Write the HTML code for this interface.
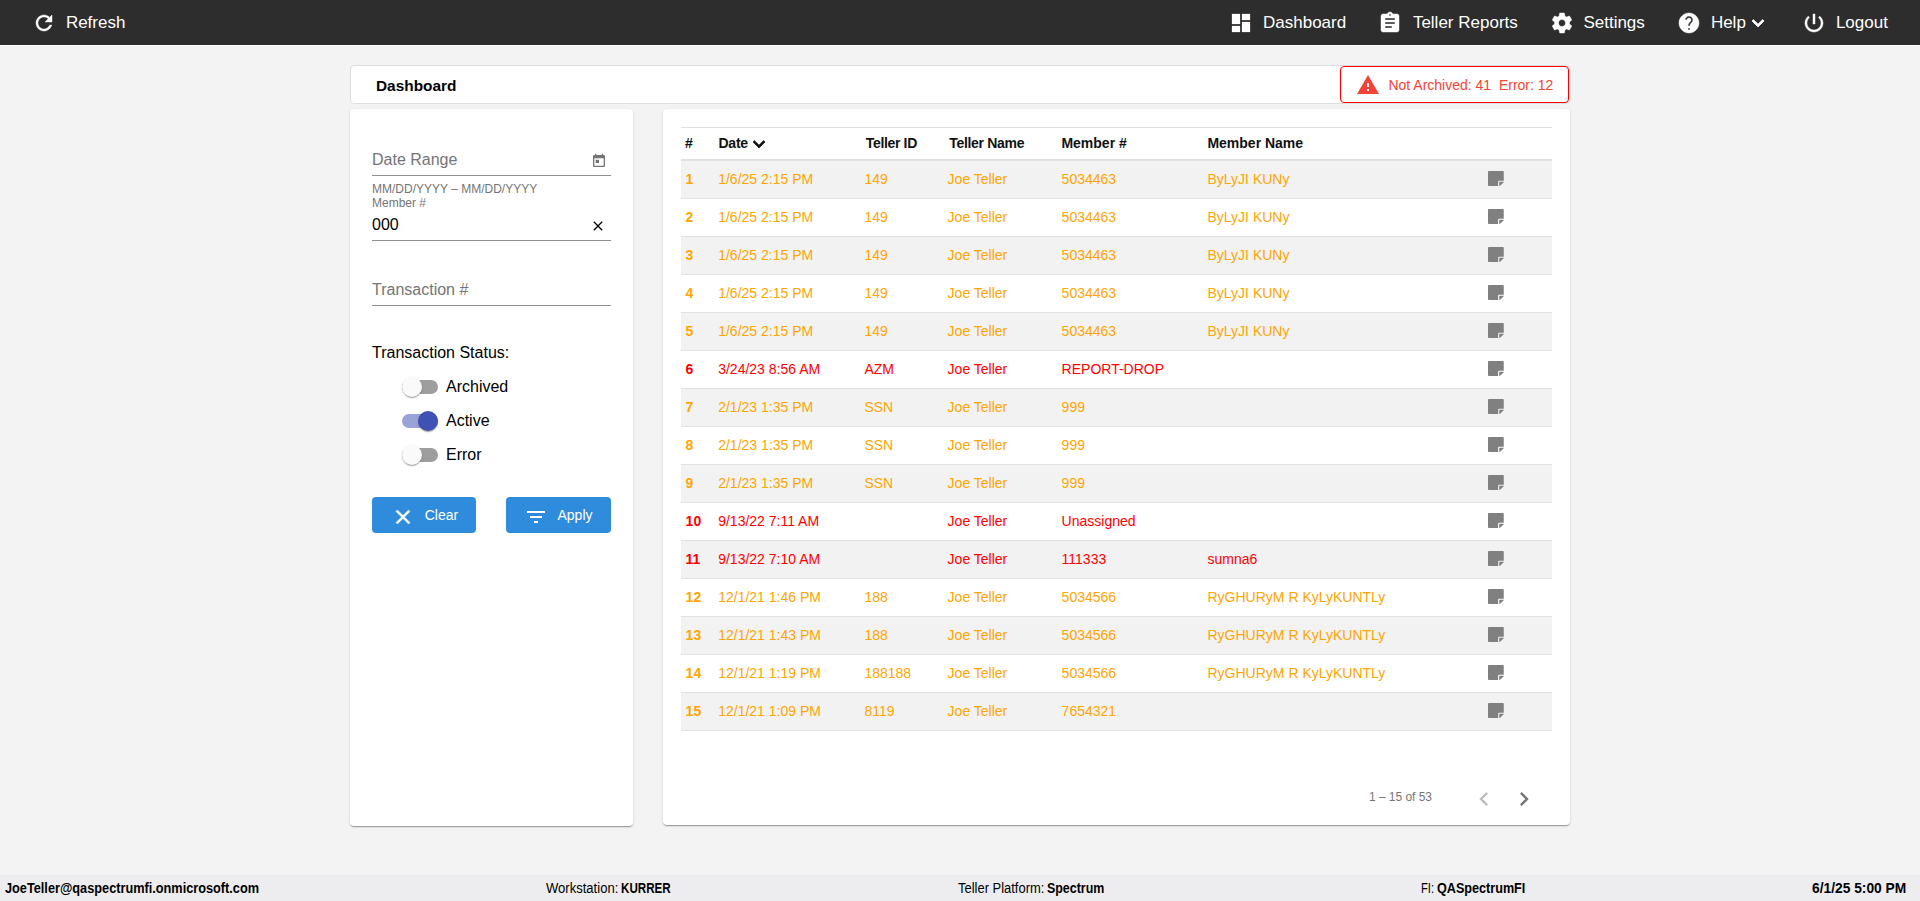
<!DOCTYPE html>
<html lang="en">
<head>
<meta charset="utf-8">
<title>Dashboard</title>
<style>
*{box-sizing:border-box;margin:0;padding:0}
html,body{width:1920px;height:901px;overflow:hidden}
body{background:#f3f3f3;font-family:"Liberation Sans",sans-serif;color:#000;position:relative}
.abs{position:absolute}
svg{display:block;overflow:visible}
#nav{position:absolute;left:0;top:0;width:1920px;height:46px;background:#2d2d2d;border-bottom:1px solid #fff}
.ni{position:absolute;top:0;height:45px;line-height:45px;color:#fff;font-size:17px;white-space:nowrap}
.ic{position:absolute;top:11px;width:24px;height:24px;fill:#fff;stroke:#fff;stroke-width:.45px}
#titlebar{position:absolute;left:350px;top:65px;width:1220px;height:39px;background:#fff;border:1px solid #dedede;border-radius:4px}
#titlebar .t{position:absolute;left:25.2px;top:1px;line-height:37px;font-weight:bold;font-size:15.5px;transform:scaleX(.993);transform-origin:0 0}
#alert{position:absolute;left:1340px;top:66px;width:229px;height:37px;border:1px solid #ff0000;border-radius:4px;background:#fff;color:#f44336;font-size:14px;line-height:36px;white-space:nowrap}
.card{position:absolute;background:#fff;border-radius:4px;box-shadow:0 2px 1px -1px rgba(0,0,0,.2),0 1px 1px 0 rgba(0,0,0,.14),0 1px 3px 0 rgba(0,0,0,.12)}
#left{left:350px;top:109px;width:283px;height:717px}
#right{left:663px;top:109px;width:907px;height:716px}
.fld{position:absolute;left:372px;width:239px;height:1px;background:#8f8f8f}
.lbl{position:absolute;left:372px;color:#757575;font-size:16px;line-height:18px;white-space:nowrap}
.hint{position:absolute;left:372px;color:#757575;font-size:12px;line-height:14px;white-space:nowrap}
.tog{position:absolute;left:402px;width:36px;height:14px;border-radius:7px;background:#9e9e9e}
.tog i{position:absolute;left:0;top:-3px;width:20px;height:20px;border-radius:50%;background:#fafafa;box-shadow:0 2px 1px -1px rgba(0,0,0,.2),0 1px 1px 0 rgba(0,0,0,.14),0 1px 3px 0 rgba(0,0,0,.12)}
.tog.on{background:#9aa3d8}
.tog.on i{left:16px;background:#3f51b5}
.toglbl{position:absolute;left:446px;font-size:16px;line-height:18px;white-space:nowrap}
.btn{position:absolute;top:497px;height:36px;background:#2f8cdc;border-radius:4px;color:#fff;font-size:14px;line-height:36px;white-space:nowrap}
.btn svg{position:absolute;fill:#fff}
#thead{position:absolute;left:681px;top:127px;width:871px;height:34px;border-top:1px solid #dee2e6;border-bottom:2px solid #dee2e6;font-size:14px;font-weight:bold;color:#111;line-height:31px;white-space:nowrap}
#thead span{position:absolute;top:0}
#tbody{position:absolute;left:681px;top:161px;width:871px}
.row{position:relative;height:38px;border-bottom:1px solid #dee2e6;font-size:14px;line-height:37px;white-space:nowrap}
.row.z{background:#f2f2f2}
.row span{position:absolute;top:0}
.row.o{color:#ffa500}
.row.r{color:#ff0000}
.c0{left:4.6px;font-weight:bold}
.c1{left:37.2px}.c2{left:183.4px}.c3{left:266.6px}.c4{left:380.6px}.c5{left:526.5px}
.nt{position:absolute;left:807.2px;top:9.6px;fill:#808080}
#foot{position:absolute;left:0;top:875px;width:1920px;height:26px;background:#ededef;font-size:14px;line-height:27px;color:#000}
#foot span{position:absolute;top:0;white-space:nowrap}
#foot b{position:absolute;top:0;white-space:nowrap}
#foot span,#foot b{transform-origin:0 0}
</style>
</head>
<body>
<div id="nav">
  <svg class="ic" style="left:32px" viewBox="0 0 24 24"><path d="M17.65 6.35C16.2 4.9 14.21 4 12 4c-4.42 0-7.99 3.58-7.99 8s3.570 8 7.990 8c3.730 0 6.840-2.550 7.730-6h-2.080c-.82 2.330-3.040 4-5.650 4-3.310 0-6-2.690-6-6s2.690-6 6-6c1.660 0 3.140.69 4.220 1.780L13 11h7V4l-2.350 2.350z"/></svg>
  <div class="ni" style="left:65.9px">Refresh</div>
  <svg class="ic" style="left:1229.1px;stroke-width:.25px" viewBox="0 0 24 24"><path d="M3 13h8V3H3v10zm0 8h8v-6H3v6zm10 0h8V11h-8v10zm0-18v6h8V3h-8z"/></svg>
  <div class="ni" style="left:1263px">Dashboard</div>
  <svg class="ic" style="left:1378.4px" viewBox="0 0 24 24"><path d="M19 3h-4.180C14.400 1.840 13.300 1 12 1c-1.300 0-2.400.84-2.820 2H5c-1.100 0-2 .9-2 2v14c0 1.100.9 2 2 2h14c1.100 0 2-.9 2-2V5c0-1.100-.9-2-2-2zm-7 0c.55 0 1 .45 1 1s-.45 1-1 1-1-.45-1-1 .45-1 1-1zm2 14H7v-2h7v2zm3-4H7v-2h10v2zm0-4H7V7h10v2z"/></svg>
  <div class="ni" style="left:1412.9px">Teller Reports</div>
  <svg class="ic" style="left:1549.7px" viewBox="0 0 24 24"><path d="M19.43 12.98c.04-.32.07-.64.07-.98s-.03-.66-.07-.98l2.110-1.650c.19-.15.24-.42.12-.64l-2-3.460c-.12-.22-.39-.3-.61-.22l-2.490 1c-.52-.4-1.080-.73-1.690-.98l-.38-2.650C14.460 2.180 14.250 2 14 2h-4c-.25 0-.46.18-.49.42l-.38 2.650c-.61.25-1.170.59-1.690.98l-2.490-1c-.23-.09-.49 0-.61.22l-2 3.460c-.13.220-.07.490.12.640l2.110 1.650c-.04.320-.07.650-.07.980s.03.660.07.980l-2.110 1.650c-.19.150-.24.420-.12.640l2 3.460c.12.220.39.300.61.220l2.490-1c.52.400 1.080.730 1.690.980l.38 2.650c.03.240.24.420.49.420h4c.25 0 .46-.18.490-.42l.38-2.650c.61-.25 1.170-.59 1.690-.98l2.490 1c.23.090.49 0 .61-.22l2-3.460c.12-.22.070-.49-.12-.64l-2.110-1.650zM12 15.500c-1.930 0-3.500-1.570-3.500-3.500s1.570-3.500 3.500-3.500 3.500 1.570 3.500 3.500-1.570 3.500-3.500 3.500z"/></svg>
  <div class="ni" style="left:1583.4px">Settings</div>
  <svg class="ic" style="left:1677.4px" viewBox="0 0 24 24"><path d="M12 2C6.480 2 2 6.480 2 12s4.480 10 10 10 10-4.480 10-10S17.520 2 12 2zm1 17h-2v-2h2v2zm2.070-7.750l-.9.92C13.450 12.900 13 13.500 13 15h-2v-.5c0-1.100.45-2.100 1.170-2.830l1.240-1.260c.37-.36.59-.86.59-1.410 0-1.100-.9-2-2-2s-2 .9-2 2H8c0-2.210 1.790-4 4-4s4 1.790 4 4c0 .88-.36 1.680-.93 2.250z"/></svg>
  <div class="ni" style="left:1710.9px">Help</div>
  <svg class="ic" style="left:1746.1px;stroke-width:.8px" viewBox="0 0 24 24"><path d="M16.590 8.590L12 13.170 7.410 8.590 6 10l6 6 6-6z"/></svg>
  <svg class="ic" style="left:1802px" viewBox="0 0 24 24"><path d="M13 3h-2v10h2V3zm4.830 2.170l-1.420 1.420C17.990 7.860 19 9.810 19 12c0 3.870-3.130 7-7 7s-7-3.130-7-7c0-2.190 1.010-4.140 2.580-5.420L6.170 5.170C4.230 6.820 3 9.260 3 12c0 4.970 4.030 9 9 9s9-4.030 9-9c0-2.740-1.230-5.180-3.170-6.830z"/></svg>
  <div class="ni" style="left:1835.9px">Logout</div>
</div>

<div id="titlebar"><div class="t">Dashboard</div></div>
<div id="alert">
  <svg class="abs" style="left:14.7px;top:6.2px;fill:#f44336" width="24" height="24" viewBox="0 0 24 24"><path d="M1 21h22L12 2 1 21zm12-3h-2v-2h2v2zm0-4h-2v-4h2v4z"/></svg>
  <span class="abs" style="left:47.4px;top:0">Not Archived: 41&nbsp; Error: 12</span>
</div>

<div class="card" id="left"></div>
<div class="card" id="right"></div>

<div class="lbl" style="top:151px">Date Range</div>
<svg class="abs" style="left:591px;top:153px;fill:#757575" width="16" height="16" viewBox="0 0 24 24"><path d="M19 3h-1V1h-2v2H8V1H6v2H5c-1.110 0-1.990.9-1.990 2L3 19c0 1.100.89 2 2 2h14c1.100 0 2-.9 2-2V5c0-1.100-.9-2-2-2zm0 16H5V8h14v11zM7 10h5v5H7z"/></svg>
<div class="fld" style="top:175px"></div>
<div class="hint" style="top:182px">MM/DD/YYYY – MM/DD/YYYY</div>
<div class="hint" style="top:196px">Member #</div>
<div class="lbl" style="top:216px;color:#000">000</div>
<svg class="abs" style="left:590.4px;top:218px;fill:#000" width="16" height="16" viewBox="0 0 24 24"><path d="M19 6.410L17.590 5 12 10.590 6.410 5 5 6.410 10.590 12 5 17.590 6.410 19 12 13.410 17.590 19 19 17.590 13.410 12z"/></svg>
<div class="fld" style="top:240px"></div>
<div class="lbl" style="top:281px">Transaction #</div>
<div class="fld" style="top:305px"></div>
<div class="lbl" style="top:344px;color:#000">Transaction Status:</div>
<div class="tog" style="top:380px"><i></i></div><div class="toglbl" style="top:378px">Archived</div>
<div class="tog on" style="top:414px"><i></i></div><div class="toglbl" style="top:412px">Active</div>
<div class="tog" style="top:448px"><i></i></div><div class="toglbl" style="top:446px">Error</div>
<div class="btn" style="left:372px;width:104px"><svg style="left:19.1px;top:8.1px" width="24" height="24" viewBox="0 0 24 24"><path stroke="#fff" stroke-width=".5" d="M19 6.410L17.590 5 12 10.590 6.410 5 5 6.410 10.590 12 5 17.590 6.410 19 12 13.410 17.590 19 19 17.590 13.410 12z"/></svg><span class="abs" style="left:52.7px">Clear</span></div>
<div class="btn" style="left:506px;width:105px"><svg style="left:17.5px;top:8px" width="24" height="24" viewBox="0 0 24 24"><path d="M10 18h4v-2h-4v2zM3 6v2h18V6H3zm3 7h12v-2H6v2z"/></svg><span class="abs" style="left:51.5px">Apply</span></div>

<div id="thead">
  <span style="left:4px">#</span><span style="left:37.5px;letter-spacing:-.25px">Date</span><span style="left:184.8px;letter-spacing:-.34px">Teller ID</span><span style="left:268.2px;letter-spacing:-.3px">Teller Name</span><span style="left:380.4px">Member #</span><span style="left:526.4px">Member Name</span>
  <svg class="abs" style="left:66.45px;top:3.7px" width="24" height="24" viewBox="0 0 24 24"><path d="M16.590 8.590L12 13.170 7.410 8.590 6 10l6 6 6-6z" fill="#111" stroke="#111" stroke-width=".7"/></svg>
</div>
<div id="tbody">
<div class="row o z"><span class="c0">1</span><span class="c1">1/6/25 2:15 PM</span><span class="c2">149</span><span class="c3">Joe Teller</span><span class="c4">5034463</span><span class="c5">ByLyJI KUNy</span><svg class="nt" width="15.75" height="15.1" viewBox="0 32 448 448" preserveAspectRatio="none"><path d="M312 320h136V56c0-13.300-10.700-24-24-24H24C10.700 32 0 42.700 0 56v400c0 13.300 10.700 24 24 24h264V344c0-13.200 10.800-24 24-24zm129 55l-98 98c-4.500 4.500-10.600 7-17 7h-6V352h128v6.100c0 6.300-2.500 12.400-7 16.900z"/></svg></div>
<div class="row o"><span class="c0">2</span><span class="c1">1/6/25 2:15 PM</span><span class="c2">149</span><span class="c3">Joe Teller</span><span class="c4">5034463</span><span class="c5">ByLyJI KUNy</span><svg class="nt" width="15.75" height="15.1" viewBox="0 32 448 448" preserveAspectRatio="none"><path d="M312 320h136V56c0-13.300-10.700-24-24-24H24C10.700 32 0 42.700 0 56v400c0 13.300 10.700 24 24 24h264V344c0-13.200 10.800-24 24-24zm129 55l-98 98c-4.500 4.500-10.600 7-17 7h-6V352h128v6.100c0 6.300-2.500 12.400-7 16.900z"/></svg></div>
<div class="row o z"><span class="c0">3</span><span class="c1">1/6/25 2:15 PM</span><span class="c2">149</span><span class="c3">Joe Teller</span><span class="c4">5034463</span><span class="c5">ByLyJI KUNy</span><svg class="nt" width="15.75" height="15.1" viewBox="0 32 448 448" preserveAspectRatio="none"><path d="M312 320h136V56c0-13.300-10.700-24-24-24H24C10.700 32 0 42.700 0 56v400c0 13.300 10.700 24 24 24h264V344c0-13.200 10.800-24 24-24zm129 55l-98 98c-4.500 4.500-10.600 7-17 7h-6V352h128v6.100c0 6.300-2.500 12.400-7 16.900z"/></svg></div>
<div class="row o"><span class="c0">4</span><span class="c1">1/6/25 2:15 PM</span><span class="c2">149</span><span class="c3">Joe Teller</span><span class="c4">5034463</span><span class="c5">ByLyJI KUNy</span><svg class="nt" width="15.75" height="15.1" viewBox="0 32 448 448" preserveAspectRatio="none"><path d="M312 320h136V56c0-13.300-10.700-24-24-24H24C10.700 32 0 42.700 0 56v400c0 13.300 10.700 24 24 24h264V344c0-13.200 10.800-24 24-24zm129 55l-98 98c-4.500 4.500-10.600 7-17 7h-6V352h128v6.100c0 6.300-2.500 12.400-7 16.900z"/></svg></div>
<div class="row o z"><span class="c0">5</span><span class="c1">1/6/25 2:15 PM</span><span class="c2">149</span><span class="c3">Joe Teller</span><span class="c4">5034463</span><span class="c5">ByLyJI KUNy</span><svg class="nt" width="15.75" height="15.1" viewBox="0 32 448 448" preserveAspectRatio="none"><path d="M312 320h136V56c0-13.300-10.700-24-24-24H24C10.700 32 0 42.700 0 56v400c0 13.300 10.700 24 24 24h264V344c0-13.200 10.800-24 24-24zm129 55l-98 98c-4.500 4.500-10.600 7-17 7h-6V352h128v6.100c0 6.300-2.500 12.400-7 16.900z"/></svg></div>
<div class="row r"><span class="c0">6</span><span class="c1">3/24/23 8:56 AM</span><span class="c2">AZM</span><span class="c3">Joe Teller</span><span class="c4">REPORT-DROP</span><svg class="nt" width="15.75" height="15.1" viewBox="0 32 448 448" preserveAspectRatio="none"><path d="M312 320h136V56c0-13.300-10.700-24-24-24H24C10.700 32 0 42.700 0 56v400c0 13.300 10.700 24 24 24h264V344c0-13.200 10.800-24 24-24zm129 55l-98 98c-4.500 4.500-10.600 7-17 7h-6V352h128v6.100c0 6.300-2.500 12.400-7 16.900z"/></svg></div>
<div class="row o z"><span class="c0">7</span><span class="c1">2/1/23 1:35 PM</span><span class="c2">SSN</span><span class="c3">Joe Teller</span><span class="c4">999</span><svg class="nt" width="15.75" height="15.1" viewBox="0 32 448 448" preserveAspectRatio="none"><path d="M312 320h136V56c0-13.300-10.700-24-24-24H24C10.700 32 0 42.700 0 56v400c0 13.300 10.700 24 24 24h264V344c0-13.200 10.800-24 24-24zm129 55l-98 98c-4.500 4.500-10.600 7-17 7h-6V352h128v6.100c0 6.300-2.500 12.400-7 16.900z"/></svg></div>
<div class="row o"><span class="c0">8</span><span class="c1">2/1/23 1:35 PM</span><span class="c2">SSN</span><span class="c3">Joe Teller</span><span class="c4">999</span><svg class="nt" width="15.75" height="15.1" viewBox="0 32 448 448" preserveAspectRatio="none"><path d="M312 320h136V56c0-13.300-10.700-24-24-24H24C10.700 32 0 42.700 0 56v400c0 13.300 10.700 24 24 24h264V344c0-13.200 10.800-24 24-24zm129 55l-98 98c-4.500 4.500-10.600 7-17 7h-6V352h128v6.100c0 6.300-2.500 12.400-7 16.900z"/></svg></div>
<div class="row o z"><span class="c0">9</span><span class="c1">2/1/23 1:35 PM</span><span class="c2">SSN</span><span class="c3">Joe Teller</span><span class="c4">999</span><svg class="nt" width="15.75" height="15.1" viewBox="0 32 448 448" preserveAspectRatio="none"><path d="M312 320h136V56c0-13.300-10.700-24-24-24H24C10.700 32 0 42.700 0 56v400c0 13.300 10.700 24 24 24h264V344c0-13.200 10.800-24 24-24zm129 55l-98 98c-4.500 4.500-10.600 7-17 7h-6V352h128v6.100c0 6.300-2.500 12.400-7 16.900z"/></svg></div>
<div class="row r"><span class="c0">10</span><span class="c1">9/13/22 7:11 AM</span><span class="c3">Joe Teller</span><span class="c4">Unassigned</span><svg class="nt" width="15.75" height="15.1" viewBox="0 32 448 448" preserveAspectRatio="none"><path d="M312 320h136V56c0-13.300-10.700-24-24-24H24C10.700 32 0 42.700 0 56v400c0 13.300 10.700 24 24 24h264V344c0-13.200 10.800-24 24-24zm129 55l-98 98c-4.500 4.500-10.600 7-17 7h-6V352h128v6.100c0 6.300-2.500 12.400-7 16.900z"/></svg></div>
<div class="row r z"><span class="c0">11</span><span class="c1">9/13/22 7:10 AM</span><span class="c3">Joe Teller</span><span class="c4">111333</span><span class="c5">sumna6</span><svg class="nt" width="15.75" height="15.1" viewBox="0 32 448 448" preserveAspectRatio="none"><path d="M312 320h136V56c0-13.300-10.700-24-24-24H24C10.700 32 0 42.700 0 56v400c0 13.300 10.700 24 24 24h264V344c0-13.200 10.800-24 24-24zm129 55l-98 98c-4.500 4.500-10.600 7-17 7h-6V352h128v6.100c0 6.300-2.500 12.400-7 16.900z"/></svg></div>
<div class="row o"><span class="c0">12</span><span class="c1">12/1/21 1:46 PM</span><span class="c2">188</span><span class="c3">Joe Teller</span><span class="c4">5034566</span><span class="c5">RyGHURyM R KyLyKUNTLy</span><svg class="nt" width="15.75" height="15.1" viewBox="0 32 448 448" preserveAspectRatio="none"><path d="M312 320h136V56c0-13.300-10.700-24-24-24H24C10.700 32 0 42.700 0 56v400c0 13.300 10.700 24 24 24h264V344c0-13.200 10.800-24 24-24zm129 55l-98 98c-4.500 4.500-10.600 7-17 7h-6V352h128v6.100c0 6.300-2.500 12.400-7 16.900z"/></svg></div>
<div class="row o z"><span class="c0">13</span><span class="c1">12/1/21 1:43 PM</span><span class="c2">188</span><span class="c3">Joe Teller</span><span class="c4">5034566</span><span class="c5">RyGHURyM R KyLyKUNTLy</span><svg class="nt" width="15.75" height="15.1" viewBox="0 32 448 448" preserveAspectRatio="none"><path d="M312 320h136V56c0-13.300-10.700-24-24-24H24C10.700 32 0 42.700 0 56v400c0 13.300 10.700 24 24 24h264V344c0-13.200 10.800-24 24-24zm129 55l-98 98c-4.500 4.500-10.600 7-17 7h-6V352h128v6.100c0 6.300-2.500 12.400-7 16.900z"/></svg></div>
<div class="row o"><span class="c0">14</span><span class="c1">12/1/21 1:19 PM</span><span class="c2">188188</span><span class="c3">Joe Teller</span><span class="c4">5034566</span><span class="c5">RyGHURyM R KyLyKUNTLy</span><svg class="nt" width="15.75" height="15.1" viewBox="0 32 448 448" preserveAspectRatio="none"><path d="M312 320h136V56c0-13.300-10.700-24-24-24H24C10.700 32 0 42.700 0 56v400c0 13.300 10.700 24 24 24h264V344c0-13.200 10.800-24 24-24zm129 55l-98 98c-4.500 4.500-10.600 7-17 7h-6V352h128v6.100c0 6.300-2.500 12.400-7 16.900z"/></svg></div>
<div class="row o z"><span class="c0">15</span><span class="c1">12/1/21 1:09 PM</span><span class="c2">8119</span><span class="c3">Joe Teller</span><span class="c4">7654321</span><svg class="nt" width="15.75" height="15.1" viewBox="0 32 448 448" preserveAspectRatio="none"><path d="M312 320h136V56c0-13.300-10.700-24-24-24H24C10.700 32 0 42.700 0 56v400c0 13.300 10.700 24 24 24h264V344c0-13.200 10.800-24 24-24zm129 55l-98 98c-4.500 4.500-10.600 7-17 7h-6V352h128v6.100c0 6.300-2.500 12.400-7 16.900z"/></svg></div>
</div>
<div class="abs" style="left:1369px;top:790px;font-size:12px;line-height:14px;color:#757575;white-space:nowrap;letter-spacing:-.04px">1 – 15 of 53</div>
<svg class="abs" style="left:1470px;top:785.3px;fill:#bdbdbd" width="28" height="28" viewBox="0 0 24 24"><path d="M15.410 7.410L14 6l-6 6 6 6 1.410-1.410L10.830 12z"/></svg>
<svg class="abs" style="left:1509.6px;top:785.3px;fill:#757575" width="28" height="28" viewBox="0 0 24 24"><path d="M10 6L8.590 7.410 13.170 12l-4.580 4.590L10 18l6-6z"/></svg>

<div id="foot">
  <b id="f1" style="left:5px;transform:scaleX(0.909)">JoeTeller@qaspectrumfi.onmicrosoft.com</b>
  <span id="f2" style="left:545.8px;transform:scaleX(0.932)">Workstation:</span><b id="f3" style="left:621px;transform:scaleX(0.829)">KURRER</b>
  <span id="f4" style="left:957.6px;transform:scaleX(0.925)">Teller Platform:</span><b id="f5" style="left:1046.5px;transform:scaleX(0.887)">Spectrum</b>
  <span id="f6" style="left:1421.2px;transform:scaleX(0.800)">FI:</span><b id="f7" style="left:1437.2px;transform:scaleX(0.901)">QASpectrumFI</b>
  <b id="f8" style="left:1812px;transform:scaleX(0.984)">6/1/25 5:00 PM</b>
</div>
</body>
</html>
